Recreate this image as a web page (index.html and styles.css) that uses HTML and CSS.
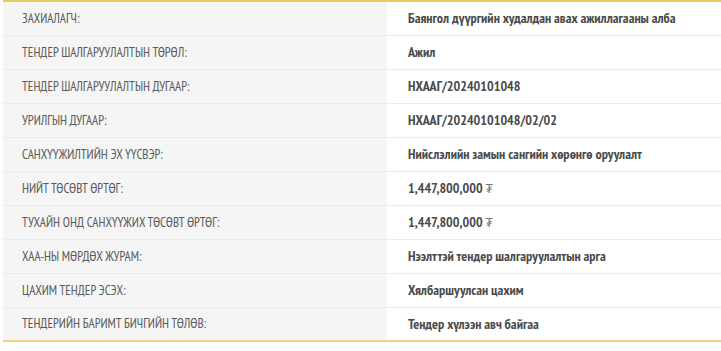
FILE: index.html
```html
<!DOCTYPE html>
<html lang="mn">
<head>
<meta charset="utf-8">
<link rel="stylesheet" href="styles.css">
</head>
<body>
<div class="wrap">
  <table class="info">
    <tr><th>Захиалагч:</th><td>Баянгол дүүргийн худалдан авах ажиллагааны алба</td></tr>
    <tr><th>Тендер шалгаруулалтын төрөл:</th><td>Ажил</td></tr>
    <tr><th>Тендер шалгаруулалтын дугаар:</th><td>НХААГ/20240101048</td></tr>
    <tr><th>Урилгын дугаар:</th><td>НХААГ/20240101048/02/02</td></tr>
    <tr><th>Санхүүжилтийн эх үүсвэр:</th><td>Нийслэлийн замын сангийн хөрөнгө оруулалт</td></tr>
    <tr><th>Нийт төсөвт өртөг:</th><td>1,447,800,000 <span class="cur">₮</span></td></tr>
    <tr><th>Тухайн онд санхүүжих төсөвт өртөг:</th><td>1,447,800,000 <span class="cur">₮</span></td></tr>
    <tr><th>ХАА-ны мөрдөх журам:</th><td>Нээлттэй тендер шалгаруулалтын арга</td></tr>
    <tr><th>Цахим тендер эсэх:</th><td>Хялбаршуулсан цахим</td></tr>
    <tr><th>Тендерийн баримт бичгийн төлөв:</th><td>Тендер хүлээн авч байгаа</td></tr>
  </table>
</div>
</body>
</html>
```

FILE: styles.css
```css
html, body {
  margin: 0;
  padding: 0;
  background: #ffffff;
}
.wrap {
  padding-left: 3px;
  width: 718px;
}
.info {
  width: 100%;
  border-collapse: collapse;
  border-top: 2px solid #e9cc55;
  border-bottom: 2px solid #f0d27e;
  font-family: "PT Sans Narrow", "Open Sans", sans-serif;
  font-stretch: 75%;
  font-size: 14px;
}
.info tr {
  height: 34px;
  border-bottom: 1px solid #ebebeb;
}
.info tr:last-child {
  border-bottom: none;
}
.info th {
  width: 384px;
  box-sizing: border-box;
  background: #f5f5f5;
  text-align: left;
  font-weight: normal;
  font-size: 13px;
  text-transform: uppercase;
  color: #5a5a5a;
  padding: 0 0 0 19px;
  white-space: nowrap;
}
.info td {
  font-weight: bold;
  color: #4a4a4a;
  padding: 0 0 0 21px;
  white-space: nowrap;
}
.cur {
  font-weight: normal;
  font-size: 12px;
  color: #777;
}
```
